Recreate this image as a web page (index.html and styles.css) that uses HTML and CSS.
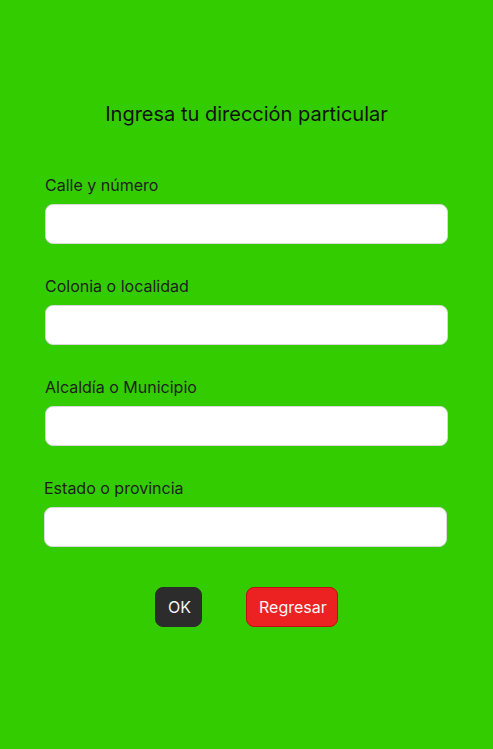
FILE: index.html
```html
<!DOCTYPE html>
<html lang="es">
<head>
<meta charset="utf-8">
<title>Dirección</title>
<link rel="stylesheet" href="styles.css">
</head>
<body>
<main class="page">
  <h1 class="title">Ingresa tu dirección particular</h1>
  <form class="form">
    <div class="field">
      <label class="label">Calle y número</label>
      <input class="input" type="text">
    </div>
    <div class="field">
      <label class="label">Colonia o localidad</label>
      <input class="input" type="text">
    </div>
    <div class="field">
      <label class="label">Alcaldía o Municipio</label>
      <input class="input" type="text">
    </div>
    <div class="field field-shift">
      <label class="label">Estado o provincia</label>
      <input class="input" type="text">
    </div>
    <div class="actions">
      <button type="button" class="btn btn-ok">OK</button>
      <button type="button" class="btn btn-back">Regresar</button>
    </div>
  </form>
</main>
</body>
</html>
```

FILE: styles.css
```css
html, body {
  margin: 0;
  padding: 0;
}
body {
  background: #33cc00;
  font-family: Inter, "Noto Sans", sans-serif;
  color: #1e1e1e;
  width: 493px;
  height: 749px;
  overflow: hidden;
}
.page {
  display: flex;
  flex-direction: column;
  align-items: center;
  padding-top: 102px;
}
.title {
  margin: 0;
  font-size: 20px;
  font-weight: 400;
  line-height: 24px;
  color: #111;
}
.form {
  display: flex;
  flex-direction: column;
  width: 403px;
  margin-top: 50px;
  gap: 33px;
}
.field {
  display: flex;
  flex-direction: column;
  gap: 9px;
}
.field-shift {
  margin-left: -1px;
  margin-right: 1px;
}
.label {
  font-size: 16px;
  line-height: 19px;
  color: #1e1e1e;
}
.input {
  box-sizing: border-box;
  height: 40px;
  width: 100%;
  margin: 0;
  border: 1px solid #d9d9d9;
  border-radius: 8px;
  background: #fff;
  outline: none;
}
.actions {
  display: flex;
  justify-content: center;
  gap: 44px;
  margin-top: 7px;
}
.btn {
  box-sizing: border-box;
  height: 40px;
  border-radius: 8px;
  font-family: Inter, "Noto Sans", sans-serif;
  font-size: 16px;
  color: #f5f5f5;
  padding: 0 12px;
  margin: 0;
}
.btn-ok {
  background: #2c2c2c;
  border: 1px solid #2c2c2c;
  width: 47px;
}
.btn-back {
  background: #ec2222;
  border: 1px solid #c00f0f;
  width: 92px;
}
```
